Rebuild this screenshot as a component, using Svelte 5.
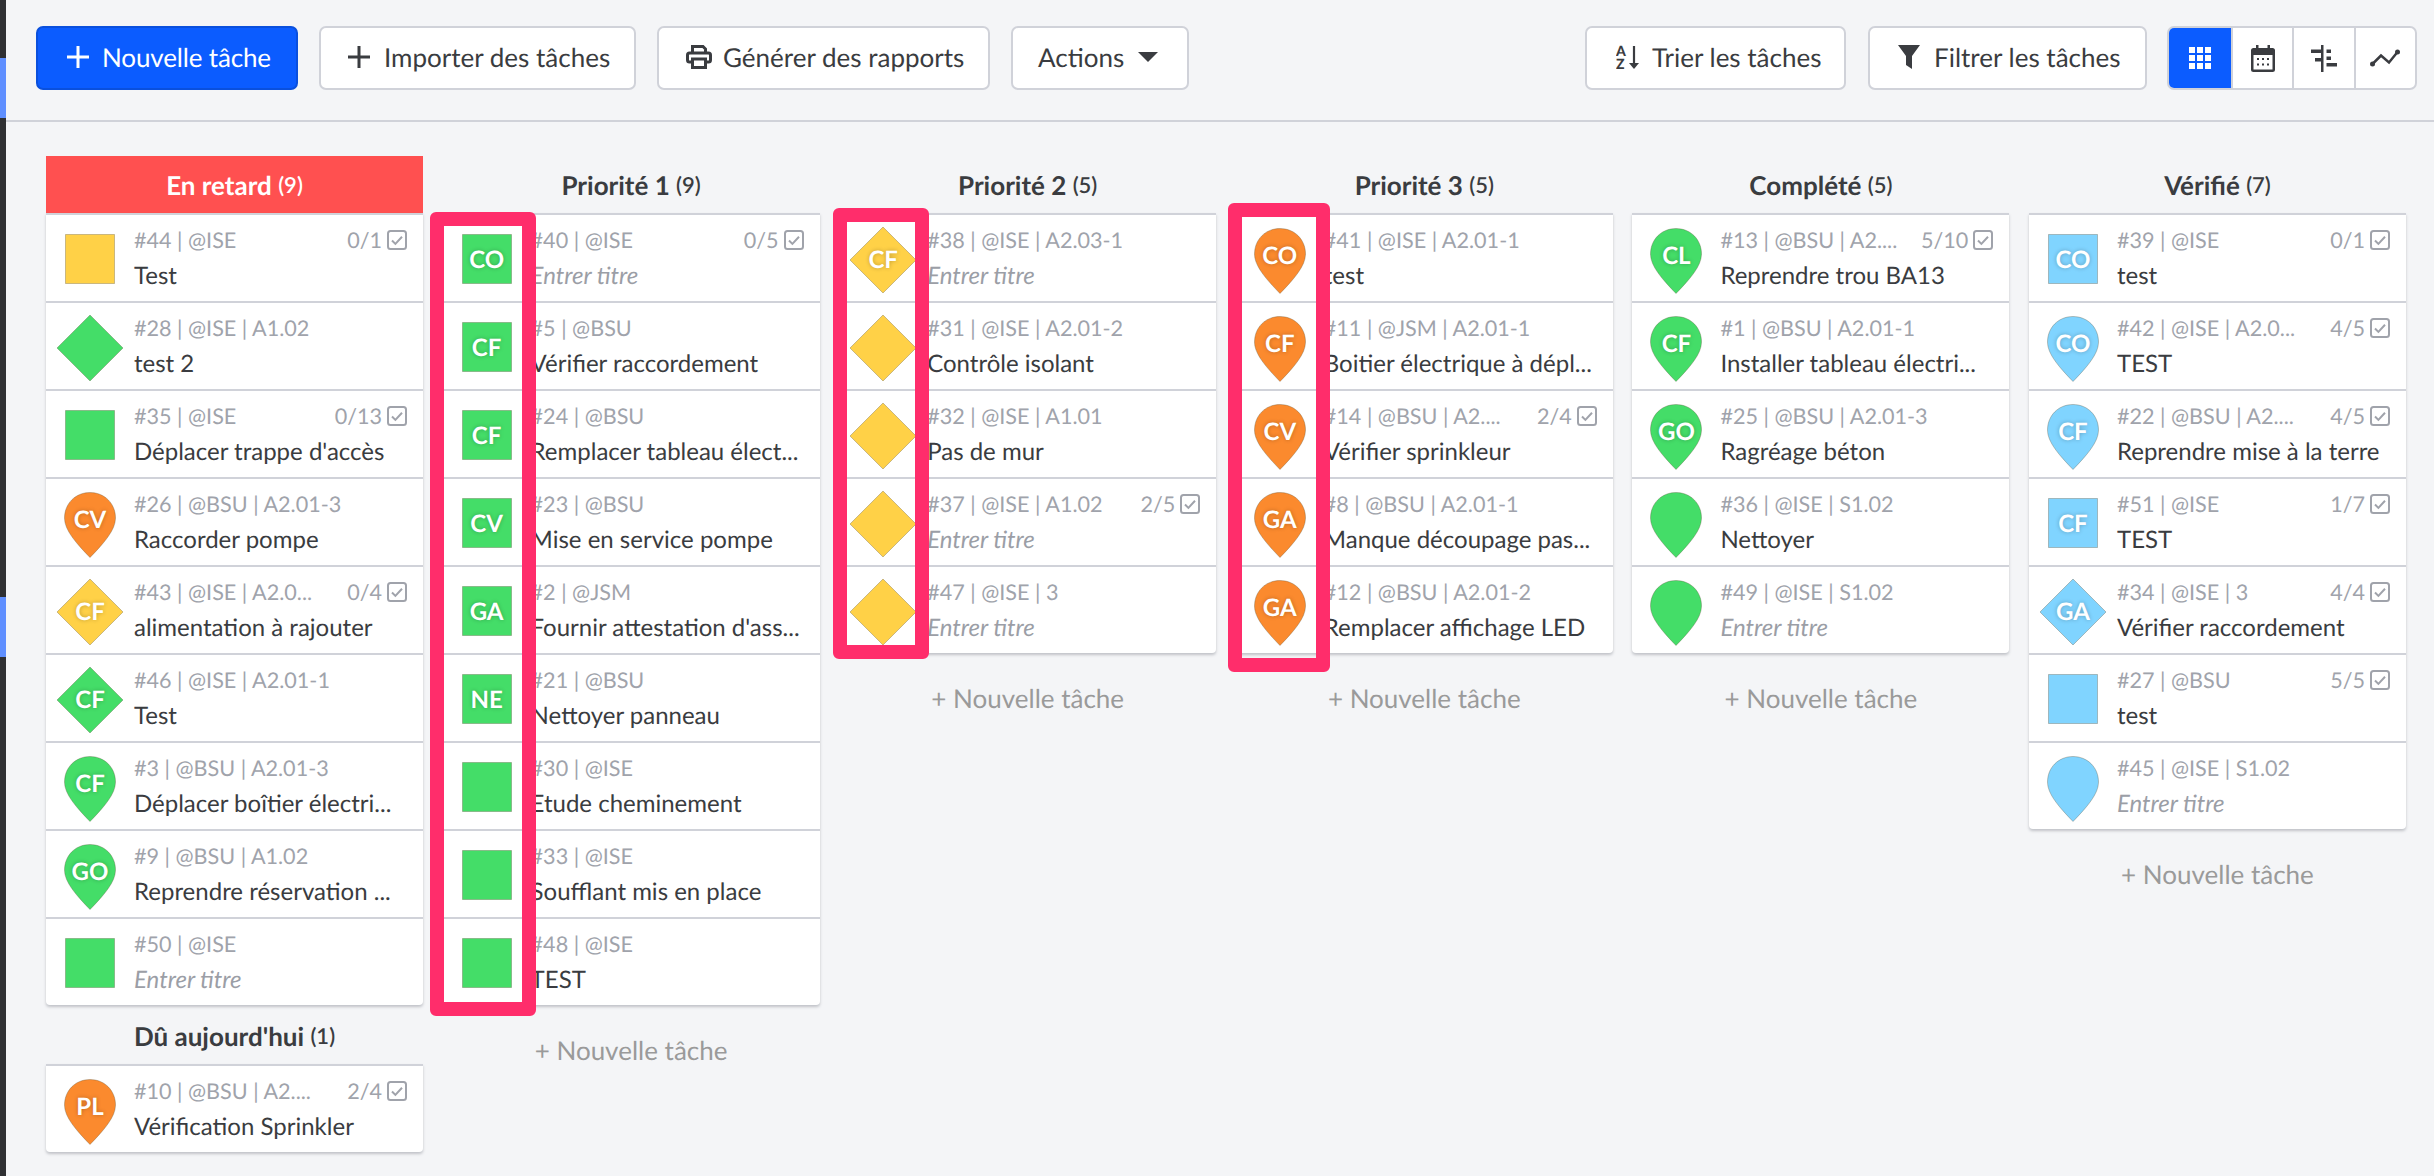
<script>
  const E = 'Entrer titre';
  const t = (shape, color, label, meta, title, prog = '') => ({ shape, color, label, meta, title, prog });

  const overdue = [
    t('sq', 'yellow', '', '#44 | @ISE', 'Test', '0/1'),
    t('di', 'green', '', '#28 | @ISE | A1.02', 'test 2'),
    t('sq', 'green', '', '#35 | @ISE', "Déplacer trappe d'accès", '0/13'),
    t('pin', 'orange', 'CV', '#26 | @BSU | A2.01-3', 'Raccorder pompe'),
    t('di', 'yellow', 'CF', '#43 | @ISE | A2.0...', 'alimentation à rajouter', '0/4'),
    t('di', 'green', 'CF', '#46 | @ISE | A2.01-1', 'Test'),
    t('pin', 'green', 'CF', '#3 | @BSU | A2.01-3', 'Déplacer boîtier électri...'),
    t('pin', 'green', 'GO', '#9 | @BSU | A1.02', 'Reprendre réservation ...'),
    t('sq', 'green', '', '#50 | @ISE', E)
  ];
  const today = [t('pin', 'orange', 'PL', '#10 | @BSU | A2....', 'Vérification Sprinkler', '2/4')];

  const columns = [
    { name: 'Priorité 1', count: 9, tasks: [
      t('sq', 'green', 'CO', '#40 | @ISE', E, '0/5'),
      t('sq', 'green', 'CF', '#5 | @BSU', 'Vérifier raccordement'),
      t('sq', 'green', 'CF', '#24 | @BSU', 'Remplacer tableau élect...'),
      t('sq', 'green', 'CV', '#23 | @BSU', 'Mise en service pompe'),
      t('sq', 'green', 'GA', '#2 | @JSM', "Fournir attestation d'ass..."),
      t('sq', 'green', 'NE', '#21 | @BSU', 'Nettoyer panneau'),
      t('sq', 'green', '', '#30 | @ISE', 'Etude cheminement'),
      t('sq', 'green', '', '#33 | @ISE', 'Soufflant mis en place'),
      t('sq', 'green', '', '#48 | @ISE', 'TEST')
    ] },
    { name: 'Priorité 2', count: 5, tasks: [
      t('di', 'yellow', 'CF', '#38 | @ISE | A2.03-1', E),
      t('di', 'yellow', '', '#31 | @ISE | A2.01-2', 'Contrôle isolant'),
      t('di', 'yellow', '', '#32 | @ISE | A1.01', 'Pas de mur'),
      t('di', 'yellow', '', '#37 | @ISE | A1.02', E, '2/5'),
      t('di', 'yellow', '', '#47 | @ISE | 3', E)
    ] },
    { name: 'Priorité 3', count: 5, tasks: [
      t('pin', 'orange', 'CO', '#41 | @ISE | A2.01-1', 'test'),
      t('pin', 'orange', 'CF', '#11 | @JSM | A2.01-1', 'Boitier électrique à dépl...'),
      t('pin', 'orange', 'CV', '#14 | @BSU | A2....', 'Vérifier sprinkleur', '2/4'),
      t('pin', 'orange', 'GA', '#8 | @BSU | A2.01-1', 'Manque découpage pas...'),
      t('pin', 'orange', 'GA', '#12 | @BSU | A2.01-2', 'Remplacer affichage LED')
    ] },
    { name: 'Complété', count: 5, tasks: [
      t('pin', 'green', 'CL', '#13 | @BSU | A2....', 'Reprendre trou BA13', '5/10'),
      t('pin', 'green', 'CF', '#1 | @BSU | A2.01-1', 'Installer tableau électri...'),
      t('pin', 'green', 'GO', '#25 | @BSU | A2.01-3', 'Ragréage béton'),
      t('pin', 'green', '', '#36 | @ISE | S1.02', 'Nettoyer'),
      t('pin', 'green', '', '#49 | @ISE | S1.02', E)
    ] },
    { name: 'Vérifié', count: 7, tasks: [
      t('sq', 'blue', 'CO', '#39 | @ISE', 'test', '0/1'),
      t('pin', 'blue', 'CO', '#42 | @ISE | A2.0...', 'TEST', '4/5'),
      t('pin', 'blue', 'CF', '#22 | @BSU | A2....', 'Reprendre mise à la terre', '4/5'),
      t('sq', 'blue', 'CF', '#51 | @ISE', 'TEST', '1/7'),
      t('di', 'blue', 'GA', '#34 | @ISE | 3', 'Vérifier raccordement', '4/4'),
      t('sq', 'blue', '', '#27 | @BSU', 'test', '5/5'),
      t('pin', 'blue', '', '#45 | @ISE | S1.02', E)
    ] }
  ];
</script>

{#snippet plus()}
  <svg class="ic" width="22" height="22" viewBox="0 0 22 22"><path d="M11 0v22M0 11h22" stroke="currentColor" stroke-width="3" fill="none"/></svg>
{/snippet}

{#snippet card(task)}
  <div class="card">
    <div class="marker {task.color} {task.shape}">
      <svg width="68" height="68" viewBox="0 0 68 68">
        {#if task.shape === 'sq'}
          <rect x="9.5" y="8.5" width="49" height="49"/>
        {:else if task.shape === 'di'}
          <path d="M34 1 L67 34 L34 67 L1 34 Z"/>
        {:else}
          <path d="M34 2.5 C48.5 2.500 59.5 13.500 59.5 28 C59.5 40 48 53 34 67.5 C20 53 8.5 40 8.5 28 C8.5 13.500 19.5 2.500 34 2.500 Z"/>
        {/if}
      </svg>
      {#if task.label}<span class="label">{task.label}</span>{/if}
    </div>
    <div class="body">
      <div class="meta">
        <span>{task.meta}</span>
        {#if task.prog}
          <span class="prog">{task.prog}
            <svg width="20" height="20" viewBox="0 0 20 20"><rect x="1" y="1" width="18" height="18" rx="2.5" fill="none" stroke="currentColor" stroke-width="2"/><path d="M5 10.5l3.4 3.4L15 6.8" fill="none" stroke="currentColor" stroke-width="2"/></svg>
          </span>
        {/if}
      </div>
      <div class="title" class:empty={task.title === E}>{task.title}</div>
    </div>
  </div>
{/snippet}

{#snippet head(name, count, late)}
  <div class="head" class:late>{name} <small>({count})</small></div>
{/snippet}

<div class="page">
  <div class="rail"><i class="one"></i><i class="two"></i></div>
  <div class="main">
    <header class="toolbar">
      <button class="btn primary new">{@render plus()}<span>Nouvelle tâche</span></button>
      <button class="btn import">{@render plus()}<span>Importer des tâches</span></button>
      <button class="btn report">
        <svg class="ic" width="26" height="24" viewBox="0 0 26 24" fill="none" stroke="currentColor" stroke-width="3"><path d="M6.5 8V1.5h10.5l2.500 2.500V8"/><rect x="1.500" y="8" width="23" height="9" rx="2"/><rect x="6.500" y="14" width="13" height="8.500" fill="#fff"/></svg>
        <span>Générer des rapports</span>
      </button>
      <button class="btn actions"><span>Actions</span><span class="caret"></span></button>
      <div class="spacer"></div>
      <button class="btn sort">
        <svg class="ic" width="24" height="24" viewBox="0 0 24 24"><text x="0" y="11" class="az">A</text><text x="0" y="24" class="az">Z</text><path d="M18 1v20" stroke="currentColor" stroke-width="2.200" fill="none"/><path d="M13 18h10l-5 6z" fill="currentColor"/></svg>
        <span>Trier les tâches</span>
      </button>
      <button class="btn filter">
        <svg class="ic" width="22" height="24" viewBox="0 0 22 24"><path d="M0 0h22L14 11v13l-6-4v-9z" fill="currentColor"/></svg>
        <span>Filtrer les tâches</span>
      </button>
      <div class="views">
        <button class="view on" aria-label="Grille">
          <svg width="22" height="22" viewBox="0 0 22 22" fill="#fff"><path d="M0 0h6v6H0zM8 0h6v6H8zM16 0h6v6h-6zM0 8h6v6H0zM8 8h6v6H8zM16 8h6v6h-6zM0 16h6v6H0zM8 16h6v6H8zM16 16h6v6h-6z"/></svg>
        </button>
        <button class="view" aria-label="Calendrier">
          <svg width="24" height="27" viewBox="0 0 24 27"><path d="M5 0h2.500v3h9V0H19v3h2.500A2.500 2.500 0 0 1 24 5.500v19a2.500 2.500 0 0 1-2.500 2.500h-19A2.500 2.500 0 0 1 0 24.500v-19A2.500 2.500 0 0 1 2.500 3H5z" fill="currentColor"/><rect x="2.500" y="10" width="19" height="14.500" fill="#fff"/><path d="M6 13h2v2H6zM11 13h2v2h-2zM16 13h2v2h-2zM6 18.500h2v2H6zM11 18.500h2v2h-2zM16 18.500h2v2h-2z" fill="currentColor"/></svg>
        </button>
        <button class="view" aria-label="Gantt">
          <svg width="26" height="27" viewBox="0 0 26 27" fill="currentColor"><path d="M10 0h2.500v27H10zM0 4.500h10v3.500H0zM4 13h6v3.500H4zM15.500 4.500h4.500v3.500h-4.500zM15.500 11.500h4.500v3.500h-4.500zM15.500 18h10.500v3.500H15.500z"/></svg>
        </button>
        <button class="view" aria-label="Courbe">
          <svg width="30" height="18" viewBox="0 0 30 18"><path d="M2.500 15L11 6.500l8 7L27.500 3" fill="none" stroke="currentColor" stroke-width="2.500"/><circle cx="2.500" cy="15" r="2.500" fill="currentColor"/><circle cx="27.500" cy="3" r="2.500" fill="currentColor"/></svg>
        </button>
      </div>
    </header>

    <section class="board">
      <div class="col">
        {@render head('En retard', 9, true)}
        <div class="stack">{#each overdue as task}{@render card(task)}{/each}</div>
        {@render head("Dû aujourd'hui", 1, false)}
        <div class="stack">{#each today as task}{@render card(task)}{/each}</div>
      </div>
      {#each columns as col}
        <div class="col">
          {@render head(col.name, col.count, false)}
          <div class="stack">{#each col.tasks as task}{@render card(task)}{/each}</div>
          <div class="add">+ Nouvelle tâche</div>
        </div>
      {/each}
      <div class="mark m1"></div>
      <div class="mark m2"></div>
      <div class="mark m3"></div>
    </section>
  </div>
</div>

<style>
  :global(body) {
    margin: 0;
    background: #f4f5f7;
    font-family: Lato, "Noto Sans", sans-serif;
    color: #3a3c40;
    text-rendering: geometricPrecision;
  }
  .page { display: flex; min-height: 100vh; }
  .rail { width: 6px; flex: none; background: #2f3033; }
  .rail i { display: block; height: 60px; background: #5f8fff; }
  .rail .one { margin-top: 58px; }
  .rail .two { margin-top: 479px; }
  .main { flex: 1; min-width: 0; }

  .toolbar {
    height: 94px;
    border-bottom: 2px solid #d0d2d9;
    padding: 26px 17px 0 30px;
    display: flex;
    align-items: flex-start;
    gap: 21px;
  }
  .spacer { flex: 1; }
  .btn {
    height: 64px;
    box-sizing: border-box;
    border: 2px solid #d0d2d9;
    border-radius: 7px;
    background: #fff;
    color: #3a3c40;
    font: 400 26px Lato, sans-serif;
    text-rendering: geometricPrecision;
    display: flex;
    align-items: center;
    gap: 12px;
    padding: 0 20px 2px 29px;
    white-space: nowrap;
  }
  .primary { background: #0b5cff; border-color: #0a50dd; color: #fff; }
  .new { width: 262px; gap: 13px; padding-left: 29px; }
  .new span { letter-spacing: -0.15px; }
  .import { width: 317px; gap: 14px; padding-left: 27px; }
  .report { width: 333px; padding-left: 27px; gap: 11px; }
  .actions { width: 178px; padding-left: 25px; gap: 14px; }
  .sort { width: 261px; padding-left: 29px; margin-right: 1px; }
  .filter { width: 279px; padding-left: 28px; gap: 14px; }
  .ic { flex: none; }
  .az { font: 900 14px Lato, sans-serif; fill: currentColor; }
  .caret {
    width: 0; height: 0;
    border-left: 10px solid transparent;
    border-right: 10px solid transparent;
    border-top: 10px solid currentColor;
  }
  .views {
    display: flex;
    height: 64px;
    width: 250px;
    box-sizing: border-box;
    border: 2px solid #d0d2d9;
    border-radius: 7px;
    background: #fff;
    overflow: hidden;
    margin-left: -1px;
  }
  .view {
    flex: 1;
    border: 0;
    border-left: 2px solid #d0d2d9;
    background: none;
    color: #3a3c40;
    padding: 0;
    display: flex;
    align-items: center;
    justify-content: center;
  }
  .view:first-child { border-left: 0; }
  .view.on { background: #0b5cff; flex: none; width: 62px; }

  .board {
    position: relative;
    display: grid;
    grid-template-columns: repeat(6, 377px);
    column-gap: 19.6px;
    padding: 34px 0 0 40px;
    align-items: start;
  }
  .head {
    height: 57px;
    display: flex;
    align-items: center;
    justify-content: center;
    font-size: 26px;
    font-weight: 700;
    color: #3a3c40;
    white-space: pre;
  }
  .head small { font-size: 22px; font-weight: 600; }
  .late { background: #ff5050; color: #fff; }
  .stack { background: #fff; box-shadow: 0 2px 3px rgba(60, 64, 80, 0.28); border-radius: 0 0 4px 4px; }
  .col > .stack + .head { margin-top: 2px; }

  .card {
    height: 88px;
    box-sizing: border-box;
    border-top: 2px solid #d0d2d9;
    display: flex;
    padding: 11px 22px 0 10px;
    gap: 10px;
  }
  .marker { width: 68px; height: 68px; flex: none; display: grid; place-items: center; }
  .marker > * { grid-area: 1 / 1; }
  .marker svg { display: block; }
  .marker path, .marker rect { stroke-width: 1; stroke: rgba(80, 70, 40, 0.3); }
  .green path, .green rect { fill: #44dd68; }
  .yellow path, .yellow rect { fill: #ffd147; }
  .orange path, .orange rect { fill: #fb8a2e; }
  .blue path, .blue rect { fill: #80d4ff; }
  .label {
    color: #fff;
    font-size: 24px;
    font-weight: 700;
    line-height: 1;
    text-shadow: 0 0 4px rgba(0, 0, 0, 0.25);
  }
  .pin .label { margin-top: -9px; }
  .body { flex: 1; min-width: 0; }
  .meta {
    height: 28px;
    display: flex;
    justify-content: space-between;
    align-items: center;
    font-size: 21.6px;
    color: #a0a3ab;
    white-space: nowrap;
  }
  .prog { display: flex; align-items: center; gap: 5px; margin-right: -6px; }
  .title {
    font-size: 24px;
    line-height: 32px;
    margin-top: 6px;
    white-space: nowrap;
    color: #3a3c40;
  }
  .empty { font-style: italic; color: #9b9ea6; }
  .add {
    height: 76px;
    display: flex;
    align-items: center;
    justify-content: center;
    padding-top: 14px;
    box-sizing: border-box;
    font-size: 26px;
    color: #9a9a9a;
  }

  .mark {
    position: absolute;
    box-sizing: border-box;
    border: 14px solid #ff2d6b;
    border-radius: 6px;
    pointer-events: none;
  }
  .m1 { left: 424px; top: 90px; width: 106px; height: 804px; }
  .m2 { left: 827px; top: 86px; width: 96px; height: 451px; }
  .m3 { left: 1222px; top: 81px; width: 102px; height: 469px; }
</style>
